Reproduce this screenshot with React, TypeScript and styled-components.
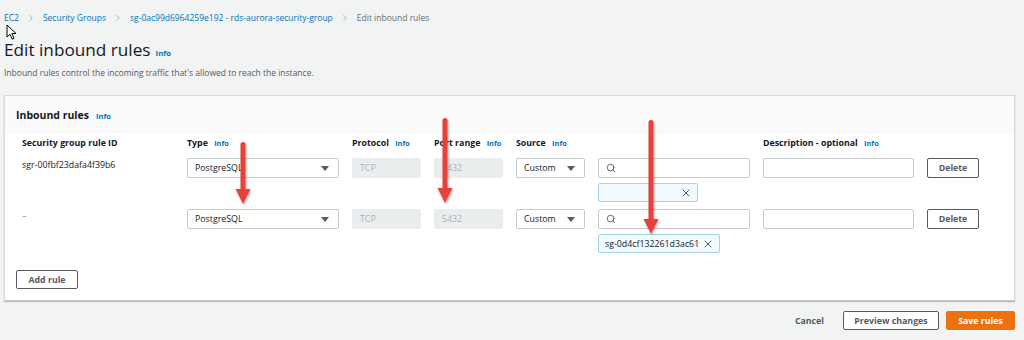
import React from "react";
import styled, { createGlobalStyle } from "styled-components";
import { Search, X, ChevronRight } from "lucide-react";

const GlobalStyle = createGlobalStyle`
  html, body {
    margin: 0;
    padding: 0;
    background: #f2f3f3;
    font-family: "Open Sans", "Liberation Sans", sans-serif;
    color: #16191f;
  }
`;

interface RuleType {
  id: string;
  tag: string;
}

const rules: RuleType[] = [
  { id: "sgr-00fbf23dafa4f39b6", tag: "" },
  { id: "–", tag: "sg-0d4cf132261d3ac61" },
];

const arrows = [
  { x: 243, top: 142, tip: 204 },
  { x: 445, top: 118, tip: 203 },
  { x: 651, top: 120, tip: 234 },
];

const App = () => {
  return (
    <Page>
      <GlobalStyle />
      <Breadcrumb>
        <Crumb>EC2</Crumb>
        <ChevronRight size={10} color="#879596" strokeWidth={1.6} />
        <Crumb>Security Groups</Crumb>
        <ChevronRight size={10} color="#879596" strokeWidth={1.6} />
        <Crumb>sg-0ac99d6964259e192 - rds-aurora-security-group</Crumb>
        <ChevronRight size={10} color="#879596" strokeWidth={1.6} />
        <Current>Edit inbound rules</Current>
      </Breadcrumb>

      <TitleRow>
        <Title>Edit inbound rules</Title>
        <InfoLink $size={7.8}>Info</InfoLink>
      </TitleRow>
      <Description>
        Inbound rules control the incoming traffic that's allowed to reach the
        instance.
      </Description>

      <Panel>
        <PanelHeader>
          <PanelTitle>Inbound rules</PanelTitle>
          <InfoLink $size={7.5}>Info</InfoLink>
        </PanelHeader>
        <PanelBody>
          <Columns $top={4}>
            <HeadCell>Security group rule ID</HeadCell>
            <HeadCell>
              Type <InfoLink $size={7.4}>Info</InfoLink>
            </HeadCell>
            <HeadCell>
              Protocol <InfoLink $size={7.4}>Info</InfoLink>
            </HeadCell>
            <HeadCell>
              Port range <InfoLink $size={7.4}>Info</InfoLink>
            </HeadCell>
            <HeadCell>
              Source <InfoLink $size={7.4}>Info</InfoLink>
            </HeadCell>
            <HeadCell />
            <HeadCell>
              Description - optional <InfoLink $size={7.4}>Info</InfoLink>
            </HeadCell>
            <HeadCell />
          </Columns>

          {rules.map((rule, i) => (
            <Columns key={i} $top={i === 0 ? 10 : 7}>
              <RuleId $muted={rule.id === "–"}>{rule.id}</RuleId>
              <Select>
                <span>PostgreSQL</span>
                <Caret />
              </Select>
              <Field $disabled>TCP</Field>
              <Field $disabled>5432</Field>
              <Select>
                <span>Custom</span>
                <Caret />
              </Select>
              <SourceCell>
                <Field>
                  <Search size={10} color="#545b64" strokeWidth={2.2} />
                </Field>
                <Tag $wide={rule.tag !== ""}>
                  <span>{rule.tag}</span>
                  <X size={12} color="#545b64" strokeWidth={2} />
                </Tag>
              </SourceCell>
              <Field />
              <Button>Delete</Button>
            </Columns>
          ))}

          <AddRow>
            <Button $width={62} $height={19}>
              Add rule
            </Button>
          </AddRow>
        </PanelBody>
      </Panel>

      <Footer>
        <TextButton>Cancel</TextButton>
        <Button $width={96} $height={19}>
          Preview changes
        </Button>
        <PrimaryButton>Save rules</PrimaryButton>
      </Footer>

      <Overlay width="1024" height="340" viewBox="0 0 1024 340">
        <defs>
          <filter id="shadow" x="-50%" y="-10%" width="200%" height="130%">
            <feDropShadow dx="1" dy="1.5" stdDeviation="1" floodColor="#000" floodOpacity="0.3" />
          </filter>
        </defs>
        {arrows.map((a, i) => (
          <g key={i} filter="url(#shadow)">
            <rect x={a.x - 2.5} y={a.top} width={5} height={a.tip - a.top - 12} rx={2.5} fill="#e8403b" />
            <polygon
              points={`${a.x - 7.5},${a.tip - 15} ${a.x + 7.5},${a.tip - 15} ${a.x},${a.tip}`}
              fill="#e8403b"
            />
          </g>
        ))}
      </Overlay>

      <Cursor width="12" height="17" viewBox="0 0 12 17">
        <path
          d="M1 1 L1 13 L4 10.2 L6.2 15.2 L8 14.4 L5.9 9.5 L10 9.5 Z"
          fill="#fff"
          stroke="#000"
          strokeWidth="1"
          strokeLinejoin="round"
        />
      </Cursor>
    </Page>
  );
};

const Page = styled.div`
  position: relative;
  width: 1024px;
  height: 340px;
  box-sizing: border-box;
  padding: 12px 9px 0 4px;
  display: flex;
  flex-direction: column;
  overflow: hidden;
`;

const Breadcrumb = styled.nav`
  display: flex;
  align-items: center;
  gap: 5px;
  height: 12px;
  font-size: 8.5px;
  line-height: 12px;

  svg {
    margin: 0 2px;
  }
`;

const Crumb = styled.a`
  color: #0073bb;
`;

const Current = styled.span`
  color: #687078;
`;

const TitleRow = styled.div`
  display: flex;
  align-items: baseline;
  gap: 1px;
  margin-top: 14px;
`;

const Title = styled.h1`
  margin: 0;
  font-size: 17.2px;
  line-height: 24px;
  font-weight: 400;
  color: #16191f;
`;

const InfoLink = styled.a<{ $size: number }>`
  font-size: ${(p) => p.$size}px;
  font-weight: 700;
  color: #0073bb;
  margin-left: 4px;
`;

const Description = styled.p`
  margin: 5px 0 0;
  font-size: 8.5px;
  line-height: 12px;
  color: #545b64;
`;

const Panel = styled.section`
  margin-top: 16px;
  background: #fff;
  border: 1px solid #d5dbdb;
  border-bottom-color: #c2c8c8;
  box-shadow: 0 1px 1px 0 rgba(0, 28, 36, 0.25);
`;

const PanelHeader = styled.header`
  display: flex;
  align-items: baseline;
  gap: 3px;
  height: 38px;
  box-sizing: border-box;
  padding: 12px 11px 0;
  background: #fafafa;
`;

const PanelTitle = styled.h2`
  margin: 0;
  font-size: 10.5px;
  line-height: 14px;
  font-weight: 700;
`;

const PanelBody = styled.div`
  padding: 0 11px 11px;
`;

const Columns = styled.div<{ $top: number }>`
  display: grid;
  grid-template-columns: 152px 152px 69px 69px 69px 152px 151px 52px;
  column-gap: 13px;
  align-items: start;
  padding-left: 6px;
  margin-top: ${(p) => p.$top}px;
`;

const HeadCell = styled.div`
  font-size: 8.8px;
  line-height: 10px;
  font-weight: 700;
  white-space: nowrap;
`;

const RuleId = styled.div<{ $muted?: boolean }>`
  font-size: 8.8px;
  line-height: 14px;
  color: ${(p) => (p.$muted ? "#879596" : "#16191f")};
`;

const Field = styled.div<{ $disabled?: boolean }>`
  height: 20px;
  box-sizing: border-box;
  display: flex;
  align-items: center;
  padding: 0 7px;
  font-size: 8.8px;
  border-radius: 2px;
  border: 1px solid ${(p) => (p.$disabled ? "#eaeded" : "#c5cbcc")};
  background: ${(p) => (p.$disabled ? "#eaeded" : "#fff")};
  color: ${(p) => (p.$disabled ? "#aab7b8" : "#16191f")};
`;

const Select = styled(Field)`
  justify-content: space-between;
  padding-right: 9px;
`;

const Caret = styled.span`
  width: 0;
  height: 0;
  border-left: 4px solid transparent;
  border-right: 4px solid transparent;
  border-top: 5px solid #545b64;
`;

const SourceCell = styled.div`
  display: flex;
  flex-direction: column;
  gap: 5px;
`;

const Tag = styled.div<{ $wide: boolean }>`
  width: ${(p) => (p.$wide ? 122 : 100)}px;
  height: 19px;
  box-sizing: border-box;
  display: flex;
  align-items: center;
  justify-content: space-between;
  padding: 0 5px 0 6px;
  font-size: 8.8px;
  color: #16191f;
  background: #f1faff;
  border: 1px solid #a6d2ea;
  border-radius: 2px;
`;

const Button = styled.button<{ $width?: number; $height?: number }>`
  width: ${(p) => p.$width ?? 52}px;
  height: ${(p) => p.$height ?? 20}px;
  box-sizing: border-box;
  padding: 0;
  font-family: inherit;
  font-size: 8.8px;
  font-weight: 700;
  color: #545b64;
  background: #fff;
  border: 1px solid #545b64;
  border-radius: 2px;
`;

const AddRow = styled.div`
  display: flex;
  margin-top: 17px;
`;

const Footer = styled.footer`
  display: flex;
  justify-content: flex-end;
  align-items: center;
  margin-top: 10px;
  gap: 7px;
`;

const TextButton = styled.span`
  font-size: 8.8px;
  font-weight: 700;
  color: #545b64;
  margin-right: 12px;
`;

const PrimaryButton = styled.button`
  width: 69px;
  height: 19px;
  padding: 0;
  font-family: inherit;
  font-size: 8.8px;
  font-weight: 700;
  color: #fff;
  background: #ec7211;
  border: 1px solid #ec7211;
  border-radius: 2px;
`;

const Overlay = styled.svg`
  position: absolute;
  left: 0;
  top: 0;
  pointer-events: none;
`;

const Cursor = styled.svg`
  position: absolute;
  left: 6px;
  top: 24px;
`;

export default App;
